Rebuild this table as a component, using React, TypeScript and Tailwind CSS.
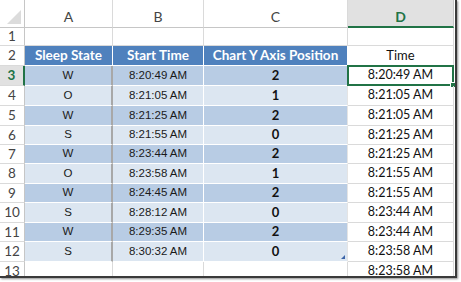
import React from "react";

const calibri = { fontFamily: "Lato, 'Open Sans', sans-serif" };
const arial = { fontFamily: "'Liberation Sans', Arial, sans-serif" };

type Row = { n: number; a: string; b: string; c: string; d: string };

const data: Row[] = [
  { n: 3, a: "W", b: "8:20:49 AM", c: "2", d: "8:20:49 AM" },
  { n: 4, a: "O", b: "8:21:05 AM", c: "1", d: "8:21:05 AM" },
  { n: 5, a: "W", b: "8:21:25 AM", c: "2", d: "8:21:05 AM" },
  { n: 6, a: "S", b: "8:21:55 AM", c: "0", d: "8:21:25 AM" },
  { n: 7, a: "W", b: "8:23:44 AM", c: "2", d: "8:21:25 AM" },
  { n: 8, a: "O", b: "8:23:58 AM", c: "1", d: "8:21:55 AM" },
  { n: 9, a: "W", b: "8:24:45 AM", c: "2", d: "8:21:55 AM" },
  { n: 10, a: "S", b: "8:28:12 AM", c: "0", d: "8:23:44 AM" },
  { n: 11, a: "W", b: "8:29:35 AM", c: "2", d: "8:23:44 AM" },
  { n: 12, a: "S", b: "8:30:32 AM", c: "0", d: "8:23:58 AM" },
];

const heights = ["h-[20px]", "h-[20px]", "h-[20px]", "h-[19px]", "h-[19px]", "h-[20px]", "h-[19px]", "h-[20px]", "h-[19px]", "h-[20px]"];

function RowHeader({ n, selected }: { n: number; selected?: boolean }) {
  return (
    <div
      style={calibri}
      className={
        "w-[25px] shrink-0 flex items-center justify-center text-[13.5px] border-b border-[#dadada] " +
        (selected
          ? "bg-[#e1e1e1] text-[#217346] font-bold border-r-2 border-r-[#217346]"
          : "text-[#444] border-r border-r-[#c6c6c6]")
      }
    >
      {n}
    </div>
  );
}

export default function App() {
  return (
    <div className="w-[461px] h-[282px] bg-white">
      <div className="w-[457px] h-[278px] overflow-hidden bg-white border-r-2 border-b-2 border-[#3a3a3a] shadow-[1px_1px_2px_rgba(0,0,0,0.45)]">
        {/* column headers */}
        <div className="flex h-[28px]" style={calibri}>
          <div className="w-[25px] shrink-0 border-r border-b border-[#c6c6c6] relative">
            <svg className="absolute right-[3px] bottom-[3px]" width="14" height="14" viewBox="0 0 14 14">
              <polygon points="14,0 14,14 0,14" fill="#dcdcdc" />
            </svg>
          </div>
          <div className="w-[88px] shrink-0 flex items-center justify-center pt-[6px] text-[14px] text-[#444] border-r border-r-[#dadada] border-b border-b-[#c6c6c6]">A</div>
          <div className="w-[91px] shrink-0 flex items-center justify-center pt-[6px] text-[14px] text-[#444] border-r border-r-[#dadada] border-b border-b-[#c6c6c6]">B</div>
          <div className="w-[144px] shrink-0 flex items-center justify-center pt-[6px] text-[14px] text-[#444] border-r border-r-[#dadada] border-b border-b-[#c6c6c6]">C</div>
          <div className="w-[106px] shrink-0 flex items-center justify-center pt-[6px] text-[14px] font-bold text-[#217346] bg-[#e1e1e1] border-r border-r-[#c6c6c6] border-b-2 border-b-[#217346]">D</div>
        </div>

        {/* row 1 */}
        <div className="flex h-[18px]">
          <RowHeader n={1} />
          <div className="w-[88px] shrink-0 border-r border-b border-[#dadada]" />
          <div className="w-[91px] shrink-0 border-r border-b border-[#dadada]" />
          <div className="w-[144px] shrink-0 border-r border-b border-[#dadada]" />
          <div className="w-[106px] shrink-0 border-r border-b border-[#dadada]" />
        </div>

        {/* row 2 */}
        <div className="flex h-[20px]" style={calibri}>
          <RowHeader n={2} />
          <div className="w-[88px] shrink-0 bg-[#4f81bd] text-white font-bold text-[13.5px] flex items-center justify-center border-r border-b border-white">Sleep State</div>
          <div className="w-[91px] shrink-0 bg-[#4f81bd] text-white font-bold text-[13.5px] flex items-center justify-center border-r border-b border-white">Start Time</div>
          <div className="w-[144px] shrink-0 bg-[#4f81bd] text-white font-bold text-[13.5px] flex items-center justify-center border-r border-b border-white">Chart Y Axis Position</div>
          <div className="w-[106px] shrink-0 text-[#111] text-[13px] flex items-center justify-center border-r border-b border-[#dadada]">Time</div>
        </div>

        {data.map((r, i) => {
          const band = i % 2 === 0 ? "bg-[#b8cce4]" : "bg-[#dce6f1]";
          return (
            <div key={r.n} className={"flex " + heights[i]}>
              <RowHeader n={r.n} selected={r.n === 3} />
              <div style={arial} className={"w-[88px] shrink-0 text-[11.5px] text-[#1a1a1a] flex items-center justify-center border-b border-b-white border-r-2 border-r-[#a8a8a8] " + band}>{r.a}</div>
              <div style={arial} className={"w-[91px] shrink-0 text-[11.5px] text-[#1a1a1a] flex items-center justify-center border-b border-r border-white " + band}>{r.b}</div>
              <div style={calibri} className={"w-[144px] shrink-0 text-[13px] font-bold text-[#111] flex items-center justify-center border-b border-b-white border-r border-r-[#e4e4e4] relative " + band}>
                {r.c}
                {r.n === 12 && (
                  <svg className="absolute right-[2px] bottom-[2px]" width="4" height="4" viewBox="0 0 4 4">
                    <polygon points="4,0 4,4 0,4" fill="#3b64a8" />
                  </svg>
                )}
              </div>
              <div style={calibri} className="w-[106px] shrink-0 text-[12.5px] text-[#111] flex items-center justify-center border-r border-b border-[#dadada] relative">
                {r.d}
                {r.n === 3 && (
                  <>
                    <div className="absolute -left-px -top-px right-[-1px] bottom-[-1px] border-2 border-[#217346]" />
                    <div className="absolute right-[-3px] bottom-[-3px] w-[6px] h-[6px] bg-[#217346] border border-white" />
                  </>
                )}
              </div>
            </div>
          );
        })}

        {/* row 13 */}
        <div className="flex h-[20px]">
          <RowHeader n={13} />
          <div className="w-[88px] shrink-0 border-r border-b border-[#dadada]" />
          <div className="w-[91px] shrink-0 border-r border-b border-[#dadada]" />
          <div className="w-[144px] shrink-0 border-r border-b border-[#dadada]" />
          <div style={calibri} className="w-[106px] shrink-0 text-[12.5px] text-[#111] flex items-center justify-center border-r border-b border-[#dadada]">8:23:58 AM</div>
        </div>
      </div>
    </div>
  );
}
